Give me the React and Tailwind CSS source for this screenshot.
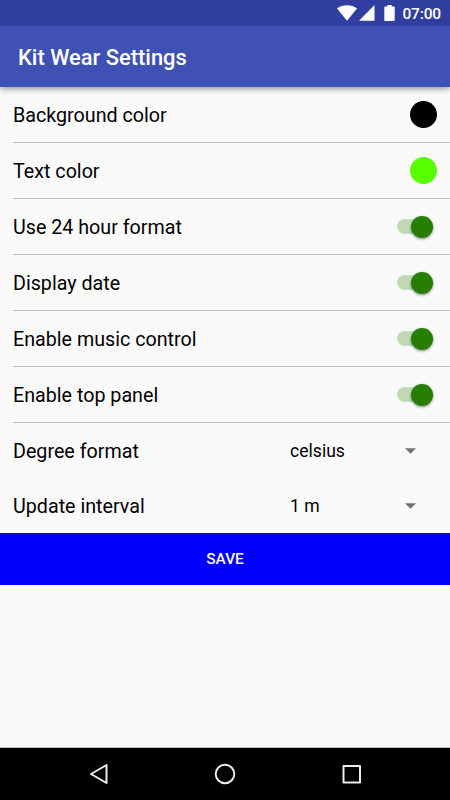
import React, { useState } from 'react';

const StatusBar = () => (
  <div className="relative z-10 flex h-[26px] items-center justify-end bg-[#303f9f] pr-[9px] text-white">
    <svg className="mr-0.5 h-4 w-5" viewBox="0 0 20 16" fill="currentColor">
      <path d="M0 3.4C2.8 1.3 6.200.2 10 .2s7.200 1.100 10 3.200L10 15.800z" />
    </svg>
    <svg className="mr-[9px] h-4 w-4" viewBox="0 0 16 16" fill="currentColor">
      <path d="M0 15.700L15.500 0v15.700z" />
    </svg>
    <svg className="mr-[7px] h-4 w-[11px]" viewBox="0 0 11 16" fill="currentColor">
      <path d="M3.300 0h4.400v1.600h2.100c.5 0 .9.400.9.900v12.600c0 .5-.4.900-.9.900H1.200c-.5 0-.9-.4-.9-.9V2.500c0-.5.4-.9.900-.9h2.100z" />
    </svg>
    <span className="relative top-0.5 text-[15.5px] font-medium leading-none tracking-[-0.01em]">07:00</span>
  </div>
);

const Row = ({ label, children }) => (
  <div className="ml-[13px] flex h-14 items-center justify-between border-b border-[#c2c2c2] pr-[13px]">
    <span className="relative top-[1.5px] text-[19.7px] leading-7 text-black">{label}</span>
    {children}
  </div>
);

const Toggle = ({ checked, onChange }) => (
  <button
    type="button"
    role="switch"
    aria-checked={checked}
    onClick={onChange}
    className={`mr-1 flex h-[15px] w-9 items-center rounded-full ${checked ? 'justify-end bg-[#c0dab8]' : 'justify-start bg-gray-300'}`}
  >
    <span
      className={`h-[22px] w-[22px] shrink-0 rounded-full shadow-[0_1px_3px_rgba(0,0,0,0.45)] ${checked ? 'bg-[#267f00]' : 'bg-gray-100'}`}
    />
  </button>
);

const Select = ({ value }) => (
  <div className="mr-[34px] flex w-[126px] items-center justify-between">
    <span className="text-[17.6px] leading-7 text-black">{value}</span>
    <svg className="h-[6px] w-[11px]" viewBox="0 0 11 6" fill="#737373">
      <path d="M0 0.200h11L5.500 5.700z" />
    </svg>
  </div>
);

const App = () => {
  const [settings, setSettings] = useState({
    hour24: true,
    date: true,
    music: true,
    topPanel: true,
  });

  const toggle = (key) => setSettings({ ...settings, [key]: !settings[key] });

  const switches = [
    { key: 'hour24', label: 'Use 24 hour format' },
    { key: 'date', label: 'Display date' },
    { key: 'music', label: 'Enable music control' },
    { key: 'topPanel', label: 'Enable top panel' },
  ];

  return (
    <div className="flex h-screen flex-col overflow-hidden bg-[#fafafa] font-['Roboto',sans-serif]">
      <StatusBar />

      <header className="flex h-[61px] shrink-0 items-center bg-[#3f51b5] pl-[18px] pt-[4px] shadow-[0_2px_6px_rgba(0,0,0,0.4)]">
        <h1 className="text-[21.9px] font-medium text-white">Kit Wear Settings</h1>
      </header>

      <main className="flex-1">
        <Row label="Background color">
          <span className="h-[27px] w-[27px] rounded-full bg-black" />
        </Row>
        <Row label="Text color">
          <span className="h-[27px] w-[27px] rounded-full bg-[#59ff00]" />
        </Row>
        {switches.map((item) => (
          <Row key={item.key} label={item.label}>
            <Toggle checked={settings[item.key]} onChange={() => toggle(item.key)} />
          </Row>
        ))}

        {/* Spinner rows have no divider */}
        <div className="flex h-14 items-center justify-between pl-[13px]">
          <span className="relative top-px text-[19.7px] leading-7 text-black">Degree format</span>
          <Select value="celsius" />
        </div>
        <div className="flex h-[54px] items-center justify-between pl-[13px]">
          <span className="relative top-px text-[19.7px] leading-7 text-black">Update interval</span>
          <Select value="1 m" />
        </div>

        <button type="button" className="h-[52px] w-full bg-[#0000ff] pt-px text-[15.4px] font-medium text-white">
          SAVE
        </button>
      </main>

      {/* Navigation bar */}
      <nav className="flex h-[53px] shrink-0 items-center justify-between border-t border-[#b5b5b5] bg-black px-[87px]">
        <svg className="h-[22px] w-[22px]" viewBox="0 0 22 22" fill="none" stroke="#ececec" strokeWidth="2" strokeLinejoin="round">
          <path d="M19.500 2v18L4 11z" />
        </svg>
        <svg className="h-[22px] w-[22px]" viewBox="0 0 22 22" fill="none" stroke="#ececec" strokeWidth="2">
          <circle cx="11" cy="11" r="9.300" />
        </svg>
        <svg className="h-[22px] w-[22px]" viewBox="0 0 22 22" fill="none" stroke="#ececec" strokeWidth="2" strokeLinejoin="round">
          <path d="M2.500 3h16.500v16.500H2.500z" />
        </svg>
      </nav>
    </div>
  );
};

export default App;
